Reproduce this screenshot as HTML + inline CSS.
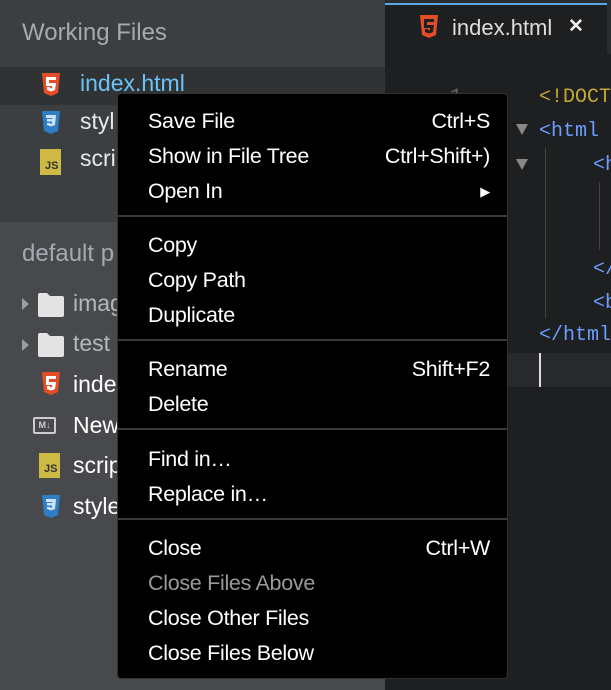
<!DOCTYPE html>
<html><head><style>
body{margin:0;width:611px;height:690px;overflow:hidden;position:relative;font-family:"Liberation Sans",sans-serif;background:#1d1f21}
.side{position:absolute;left:0;top:0;width:385px;height:690px;background:#47494c}
.wf{position:absolute;left:0;top:0;width:385px;height:222px;background:#3c3f42}
.t{position:absolute;white-space:nowrap}
.menu{position:absolute;left:117px;top:93px;width:389px;height:584px;background:#000;border-radius:4px;border:1px solid #333}
.mi{position:absolute;left:30px;right:17px;height:35px;line-height:35px;color:#fff;font-size:21.5px;letter-spacing:-0.3px}
.mi span{position:absolute;right:0}
.sep{position:absolute;left:0;right:0;height:2px;background:#3a3a3a}
.code{font-family:"Liberation Mono",monospace;font-size:20px}
.f{font-size:23px}
</style></head><body>
<div class="side"></div>
<div class="wf"></div>
<div style="position:absolute;left:0;top:67px;width:385px;height:38px;background:#303234"></div>
<div class="t" style="left:22px;top:19px;font-size:24px;color:#a3abb1">Working Files</div>
<div class="t" style="left:22px;top:240px;font-size:24px;color:#a3abb1">default p</div>
<svg class="t" style="left:41px;top:73px" width="20" height="24"><path d="M1 0h18l-2 20-7 3-7-3z" fill="#e44d26"/><path d="M5 4h10v3H8v3h7l-1 7-4 1.5-4-1.5v-3h3v1l1 .4 1-.4.2-2H5z" fill="#fff"/></svg>
<div class="t f" style="left:80px;top:70px;color:#6cc3f7">index.html</div>
<svg class="t" style="left:41px;top:111px" width="20" height="24"><path d="M1 0h18l-2 20-7 3-7-3z" fill="#2f7dc2"/><path d="M5 4h10l-1 10-4 1.5-4-1.5v-2h3v.5l1 .4 1-.4.2-2H6V8h5.5l.2-1H5z" fill="#cfe3f5"/></svg>
<div class="t f" style="left:80px;top:108px;color:#e8e8e8">styl</div>
<div class="t" style="left:40px;top:149px;width:21px;height:26px;background:#cfb945"></div>
<div class="t" style="left:45px;top:160px;font-size:11px;color:#333;font-weight:bold">JS</div>
<div class="t f" style="left:80px;top:145px;color:#e8e8e8">scri</div>
<div class="t" style="left:22px;top:298px;width:0;height:0;border-left:7px solid #9a9ea2;border-top:6px solid transparent;border-bottom:6px solid transparent"></div>
<svg class="t" style="left:38px;top:292px" width="26" height="25"><path d="M0 3a2 2 0 0 1 2-2h7l3 3h12a2 2 0 0 1 2 2v17a2 2 0 0 1-2 2H2a2 2 0 0 1-2-2z" fill="#e4e4e4"/></svg>
<div class="t f" style="left:73px;top:290px;color:#b3b8bc">imag</div>
<div class="t" style="left:22px;top:339px;width:0;height:0;border-left:7px solid #9a9ea2;border-top:6px solid transparent;border-bottom:6px solid transparent"></div>
<svg class="t" style="left:38px;top:332px" width="26" height="25"><path d="M0 3a2 2 0 0 1 2-2h7l3 3h12a2 2 0 0 1 2 2v17a2 2 0 0 1-2 2H2a2 2 0 0 1-2-2z" fill="#e4e4e4"/></svg>
<div class="t f" style="left:73px;top:330px;color:#b3b8bc">test</div>
<svg class="t" style="left:41px;top:372px" width="20" height="24"><path d="M1 0h18l-2 20-7 3-7-3z" fill="#e44d26"/><path d="M5 4h10v3H8v3h7l-1 7-4 1.5-4-1.5v-3h3v1l1 .4 1-.4.2-2H5z" fill="#fff"/></svg>
<div class="t f" style="left:73px;top:371px;color:#fff">inde</div>
<div class="t" style="left:33px;top:417px;width:19px;height:13px;border:2px solid #ccc;border-radius:2px;font-size:9px;color:#ccc;line-height:13px;text-align:center;font-weight:bold">M↓</div>
<div class="t f" style="left:73px;top:412px;color:#fff">New</div>
<div class="t" style="left:39px;top:453px;width:21px;height:25px;background:#cfb945"></div>
<div class="t" style="left:44px;top:463px;font-size:11px;color:#333;font-weight:bold">JS</div>
<div class="t f" style="left:73px;top:452px;color:#fff">scrip</div>
<svg class="t" style="left:41px;top:495px" width="20" height="24"><path d="M1 0h18l-2 20-7 3-7-3z" fill="#2f7dc2"/><path d="M5 4h10l-1 10-4 1.5-4-1.5v-2h3v.5l1 .4 1-.4.2-2H6V8h5.5l.2-1H5z" fill="#cfe3f5"/></svg>
<div class="t f" style="left:73px;top:493px;color:#fff">style</div>
<div class="t" style="left:385px;top:0;width:226px;height:54px;background:#2a2c2e"></div>
<div class="t" style="left:385px;top:3px;width:222px;height:51px;background:#1d1f21;border-top:2px solid #5aa7e6"></div>
<svg class="t" style="left:419px;top:15px" width="20" height="24"><path d="M1 0h18l-2 20-7 3-7-3z" fill="#e44d26"/><path d="M5 4h10v3H8v3h7l-1 7-4 1.5-4-1.5v-3h3v1l1 .4 1-.4.2-2H5z" fill="#1d1f21"/></svg>
<div class="t" style="left:452px;top:15px;font-size:22px;color:#ddd">index.html</div>
<div class="t" style="left:568px;top:15px;font-size:19px;color:#eee;font-weight:bold">✕</div>
<div class="t" style="left:506px;top:353px;width:105px;height:34px;background:#27292c"></div>
<div class="t" style="left:539px;top:353px;width:2px;height:34px;background:#ddd"></div>
<div class="t" style="left:545px;top:148px;width:1px;height:170px;background:#444"></div>
<div class="t" style="left:599px;top:182px;width:1px;height:68px;background:#444"></div>
<div class="t code" style="left:450px;top:86px;color:#666">1</div>
<div class="t code" style="left:539px;top:86px;color:#c5a834">&lt;!DOCT</div>
<div class="t code" style="left:539px;top:120px;color:#6a9eff">&lt;html</div>
<div class="t code" style="left:593px;top:154px;color:#6a9eff">&lt;h</div>
<div class="t code" style="left:593px;top:258px;color:#6a9eff">&lt;/</div>
<div class="t code" style="left:593px;top:292px;color:#6a9eff">&lt;b</div>
<div class="t code" style="left:539px;top:324px;color:#6a9eff">&lt;/html</div>
<div class="t" style="left:516px;top:124px;width:0;height:0;border-top:11px solid #888;border-left:6px solid transparent;border-right:6px solid transparent"></div>
<div class="t" style="left:516px;top:159px;width:0;height:0;border-top:11px solid #888;border-left:6px solid transparent;border-right:6px solid transparent"></div>
<div class="menu">
<div class="mi" style="top:10px">Save File<span>Ctrl+S</span></div>
<div class="mi" style="top:45px">Show in File Tree<span>Ctrl+Shift+)</span></div>
<div class="mi" style="top:80px">Open In<span style="font-size:13px">▶</span></div>
<div class="sep" style="top:121px"></div>
<div class="mi" style="top:134px">Copy</div>
<div class="mi" style="top:169px">Copy Path</div>
<div class="mi" style="top:204px">Duplicate</div>
<div class="sep" style="top:245px"></div>
<div class="mi" style="top:258px">Rename<span>Shift+F2</span></div>
<div class="mi" style="top:293px">Delete</div>
<div class="sep" style="top:334px"></div>
<div class="mi" style="top:348px">Find in…</div>
<div class="mi" style="top:383px">Replace in…</div>
<div class="sep" style="top:424px"></div>
<div class="mi" style="top:437px">Close<span>Ctrl+W</span></div>
<div class="mi" style="top:472px;color:#9a9a9a">Close Files Above</div>
<div class="mi" style="top:507px">Close Other Files</div>
<div class="mi" style="top:542px">Close Files Below</div>
</div>
</body></html>
